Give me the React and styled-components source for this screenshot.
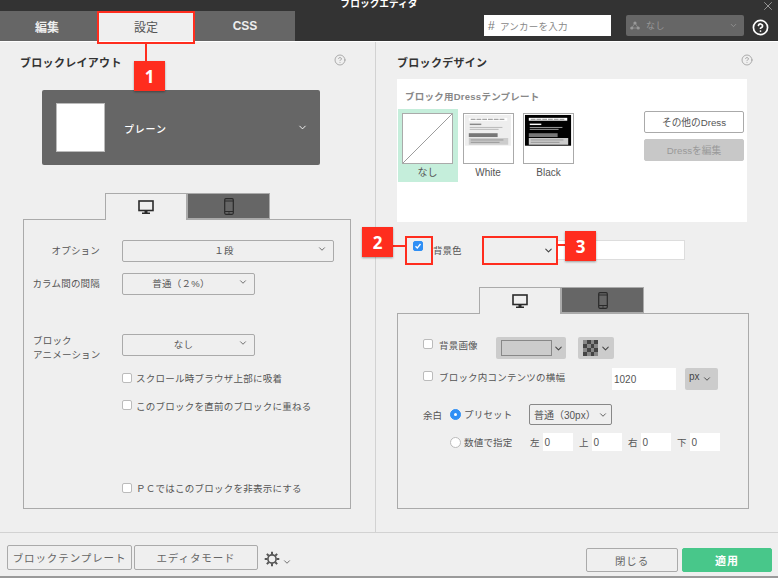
import React from "react";
import styled, { createGlobalStyle } from "styled-components";
import { ChevronDown, CircleHelp, X } from "lucide-react";

const Global = createGlobalStyle`
  html, body { margin: 0; padding: 0; background: #efefef; }
  * { box-sizing: border-box; }
  body { font-family: "Liberation Sans", "Noto Sans CJK JP", sans-serif; color: #555; }
`;

const Page = styled.div`
  position: relative; width: 778px; height: 578px; overflow: hidden; background: #efefef;
  border-bottom: 2px solid #9a9a9a;
`;
const Header = styled.header`
  position: relative; height: 41px; background: #333; display: flex; flex-direction: column;
`;
const TitleBar = styled.div`
  height: 11px; overflow: hidden; text-align: center; padding-right: 20px;
  color: #fff; font-size: 9.7px; font-weight: 700; line-height: 7px;
`;
const CloseIcon = styled(X)`
  position: absolute; top: -1px; right: 3px; color: #aaa;
`;
const HeaderRow = styled.div`
  height: 30px; display: flex; align-items: flex-start;
`;
const TopTab = styled.div`
  width: ${p => p.$w}px; height: 30px; display: flex; align-items: center; justify-content: center;
  padding-right: ${p => p.$pr || 0}px;
  font-size: 12px; font-weight: ${p => (p.$active ? 400 : 700)};
  background: ${p => (p.$active ? "#efefef" : "#666")};
  color: ${p => (p.$active ? "#555" : "#eee")};
`;
const AnchorInput = styled.div`
  margin: 4px 0 0 189px; width: 127px; height: 21px; background: #fff; display: flex; align-items: center;
  padding-left: 4px; gap: 5px; font-size: 9.5px; color: #888; letter-spacing: .25px;
`;
const HashMark = styled.span`
  font-size: 12px; color: #777;
`;
const AnchorSelect = styled.div`
  margin: 4px 0 0 15px; width: 118px; height: 21px; background: #666; border-radius: 2px; display: flex; align-items: center;
  padding: 0 6px 0 4px; gap: 6px; font-size: 9px; color: #999; letter-spacing: .6px;
`;
const Grow = styled.span`
  flex: 1;
`;
const HeadHelp = styled(CircleHelp)`
  margin: 8px 0 0 8px; color: #fff;
`;

const Main = styled.main`
  height: 491px; border-top: 1px solid #fff; display: flex;
`;
const LeftCol = styled.section`
  width: 376px; border-right: 1px solid #d2d2d2; display: flex; flex-direction: column;
`;
const RightCol = styled.section`
  flex: 1; display: flex; flex-direction: column; padding-left: 21px;
`;
const SectionHead = styled.div`
  margin-top: 11px; height: 18px; display: flex; align-items: center; justify-content: space-between;
  padding-left: ${p => p.$pl}px; width: ${p => p.$w}px;
  font-size: 11px; font-weight: 700; color: #333; letter-spacing: .3px;
`;
const SmallHelp = styled(CircleHelp)`
  color: #999; margin-top: -5px;
`;
const BlockSelect = styled.div`
  margin: 19px 0 0 42px; width: 278px; height: 75px; background: #666; border-radius: 2px;
  display: flex; align-items: center; padding: 0 12px 0 14px; color: #fff; font-size: 10px; letter-spacing: .8px; font-weight: 500;
`;
const BlockThumb = styled.div`
  width: 49px; height: 49px; background: #fff; border: 1px solid #bbb; margin-right: 19px;
`;
const BlockName = styled.span`
  flex: 1; padding-top: 2px;
`;

const DeviceTabs = styled.div`
  display: flex; margin: ${p => p.$mt}px 0 -1px ${p => p.$ml}px; position: relative; z-index: 1;
`;
const DeviceTab = styled.div`
  width: ${p => p.$w}px; height: ${p => (p.$active ? 27 : 26)}px; display: flex; align-items: center; justify-content: center;
  background: ${p => (p.$active ? "#efefef" : "#666")};
  border: 1px solid #aaa; ${p => (p.$active ? "border-bottom: 0;" : "")}
  color: #2a2a2a;
`;
const Panel = styled.div`
  width: ${p => p.$w}px; height: ${p => p.$h}px; margin-left: ${p => p.$ml}px; border: 1px solid #aaa;
  padding: ${p => p.$pt}px 0 0 ${p => p.$pl}px; display: flex; flex-direction: column;
`;
const FormRow = styled.div`
  display: flex; align-items: ${p => p.$align || "center"}; margin-top: ${p => p.$mt || 0}px; margin-left: ${p => p.$ml || 0}px;
`;
const FieldLabel = styled.div`
  width: 76px; margin-right: 22px; font-size: 9.5px; letter-spacing: .2px; line-height: 14px; color: #555; white-space: nowrap;
  text-align: ${p => (p.$left ? "left" : "right")};
  padding-left: ${p => (p.$left ? 9 : 0)}px;
`;
const Select = styled.div`
  position: relative; width: ${p => p.$w}px; height: 22px; border: 1px solid #aaa; border-radius: 2px;
  display: flex; align-items: center; justify-content: center; padding: 0 ${p => p.$pr || 0}px 3px 0;
  font-size: 9.5px; letter-spacing: .3px; color: #555;
`;
const SelectChevron = styled(ChevronDown)`
  position: absolute; right: 6px; top: 3px; color: #555;
`;
const CheckLine = styled.label`
  display: flex; align-items: center; gap: 4px; height: 14px; margin-left: 98px; margin-top: ${p => p.$mt}px;
  font-size: 9.5px; letter-spacing: .25px; color: #555; white-space: nowrap;
`;
const Box = styled.span`
  display: flex; align-items: center; justify-content: center; flex: none;
  width: 10px; height: 10px; border-radius: 2px; border: 1px solid #bbb; background: ${p => (p.$on ? "#2f8ff5" : "#fff")};
  border-color: ${p => (p.$on ? "#2f8ff5" : "#bbb")};
  margin-bottom: ${p => p.$up || 0}px;
`;

const Card = styled.div`
  margin-top: 8px; width: 350px; height: 143px; background: #fff; display: flex; flex-direction: column; padding-top: 11px;
`;
const CardTitle = styled.div`
  height: 14px; line-height: 14px; margin-left: 8px; font-size: 9.5px; font-weight: 700; color: #888; letter-spacing: .25px;
`;
const CardBody = styled.div`
  margin-top: 5px; display: flex; justify-content: space-between; padding: 0 3px 0 1px;
`;
const Tiles = styled.div`
  display: flex; gap: 1px;
`;
const Tile = styled.div`
  width: 59.5px; height: 73px; padding: 4px 0 0 4px; background: ${p => (p.$on ? "#c5eedb" : "transparent")};
`;
const Thumb = styled.svg`
  display: block; width: 51px; height: 51px; border: 1px solid #aaa; background: #fff;
`;
const TileName = styled.div`
  width: 51px; text-align: center; margin-top: 2px; font-size: 10px; line-height: 14px; color: #555;
`;
const DressButtons = styled.div`
  margin-top: 2px; display: flex; flex-direction: column; gap: 6px;
`;
const DressButton = styled.div`
  width: 100px; height: 22px; border-radius: 2px; display: flex; align-items: center; justify-content: center;
  font-size: 9.7px;
  border: 1px solid ${p => (p.$off ? "#c8c8c8" : "#aaa")};
  background: ${p => (p.$off ? "#c8c8c8" : "#fff")};
  color: ${p => (p.$off ? "#999" : "#555")};
`;
const ColorRow = styled.div`
  margin-top: 18px; height: 20px; padding-left: 16px; display: flex; align-items: center; font-size: 9.5px;
`;
const ColorLabel = styled.span`
  margin-left: 10px; width: 51px;
`;
const ColorSelect = styled.div`
  width: 73px; height: 20px; display: flex; align-items: center; justify-content: flex-end; padding-right: 3px; color: #444;
`;
const ColorValue = styled.div`
  width: 128px; height: 20px; background: #fff; border: 1px solid #ddd;
`;
const RowText = styled.span`
  width: ${p => p.$w}px; margin-left: ${p => p.$ml || 0}px; margin-bottom: ${p => p.$up || 0}px;
  font-size: 9.5px; letter-spacing: ${p => p.$ls || ".2px"}; color: #555; white-space: nowrap;
`;
const GraySelect = styled.div`
  width: ${p => p.$w}px; height: 22px; margin-left: ${p => p.$ml || 0}px; background: #ccc; border-radius: 2px;
  display: flex; align-items: center; padding-left: ${p => p.$pl}px; color: #444; font-size: 10px;
`;
const ColorSwatch = styled.div`
  width: 51px; height: 16px; background: #ccc; border: 1px solid #888; margin-right: 1px;
`;
const UnitText = styled.span`
  margin: 0 2px 5px 0;
`;
const NumberInput = styled.div`
  width: ${p => p.$w}px; height: ${p => p.$h}px; background: #fff; display: flex; align-items: center; padding-left: 2px;
  font-size: 10px; color: #555;
`;
const Gap = styled.span`
  width: ${p => p.$w}px; flex: none;
`;
const Radio = styled.span`
  width: 11px; height: 11px; border-radius: 50%; flex: none; display: flex; align-items: center; justify-content: center;
  background: ${p => (p.$on ? "#2f8ff5" : "#fff")}; border: 1px solid ${p => (p.$on ? "#2f8ff5" : "#bbb")};
`;
const RadioDot = styled.span`
  width: 3px; height: 3px; border-radius: 50%; background: #fff;
`;
const PaddingSelect = styled.div`
  width: 83px; height: 21px; border: 1px solid #888; border-radius: 2px; display: flex; align-items: center; justify-content: space-between;
  padding: 0 3px 0 4px; font-size: 10px; color: #555;
`;
const Side = styled.div`
  display: flex; align-items: center; gap: 3px; font-size: 9.5px; color: #555; margin-right: 6.5px;
`;

const Footer = styled.footer`
  height: 44px; border-top: 1px solid #d2d2d2; display: flex; padding: 12px 6px 0 7px; justify-content: space-between;
`;
const FooterGroup = styled.div`
  display: flex; gap: ${p => p.$gap}px; align-items: flex-start; margin-top: ${p => p.$mt || 0}px;
`;
const FootButton = styled.div`
  width: ${p => p.$w}px; height: ${p => p.$h}px; border: 1px solid ${p => (p.$primary ? "#48c78a" : "#aaa")}; border-radius: 2px;
  display: flex; align-items: center; justify-content: center;
  font-size: ${p => p.$fs || 10.5}px; letter-spacing: ${p => p.$ls || ".9px"}; font-weight: ${p => (p.$primary ? 700 : 400)};
  background: ${p => (p.$primary ? "#48c78a" : "transparent")}; color: ${p => (p.$primary ? "#fff" : "#666")};
`;
const GearWrap = styled.div`
  margin: 6px 0 0 4px; display: flex; align-items: flex-end; gap: 2px; color: #555;
`;

const RedOutline = styled.div`
  position: absolute; left: ${p => p.$x}px; top: ${p => p.$y}px; width: ${p => p.$w}px; height: ${p => p.$h}px;
  border: 2px solid #ff2d1e; z-index: 5;
`;
const RedLine = styled.div`
  position: absolute; left: ${p => p.$x}px; top: ${p => p.$y}px; width: ${p => p.$w}px; height: ${p => p.$h}px;
  background: #ff2d1e; z-index: 5;
`;
const Badge = styled.div`
  position: absolute; left: ${p => p.$x}px; top: ${p => p.$y}px; width: 31px; height: 30px; background: #ff2d1e; z-index: 6;
  display: flex; align-items: center; justify-content: center; color: #fff; font-size: 17px; font-weight: 700;
  font-family: "Noto Sans", sans-serif; box-shadow: 0 1px 2px rgba(0,0,0,.35);
`;

const Monitor = () => (
  <svg width="16" height="15" viewBox="0 0 16 15">
    <rect x="1" y="1" width="14" height="9.5" fill="none" stroke="currentColor" strokeWidth="1.6" />
    <path d="M6.5 11h3v1.6h2.5V14H4v-1.4h2.5z" fill="currentColor" />
  </svg>
);
const Phone = () => (
  <svg width="10" height="17" viewBox="0 0 10 17">
    <rect x=".7" y=".7" width="8.6" height="15.6" rx="1.2" fill="none" stroke="currentColor" strokeWidth="1.2" />
    <path d="M1 3h8M1 13.5h8" stroke="currentColor" />
    <circle cx="5" cy="15" r=".7" fill="currentColor" />
  </svg>
);
const Check = () => (
  <svg width="8" height="8" viewBox="0 0 8 8">
    <path d="M1.5 4.2l1.8 1.8 3.2-4" fill="none" stroke="#fff" strokeWidth="1.3" />
  </svg>
);
const Nodes = () => (
  <svg width="10" height="9" viewBox="0 0 10 9" fill="#999">
    <circle cx="5" cy="2" r="1.6" />
    <circle cx="1.8" cy="7" r="1.6" />
    <circle cx="8.2" cy="7" r="1.6" />
    <path d="M5 2L1.8 7h6.4z" fill="none" stroke="#999" strokeWidth=".7" />
  </svg>
);
const Gear = () => (
  <svg width="16" height="16" viewBox="0 0 18 18" fill="none" stroke="currentColor">
    <circle cx="9" cy="9" r="4.6" strokeWidth="1.8" />
    <path strokeWidth="2.2" d="M9 .8v3M9 14.2v3M.8 9h3M14.2 9h3M3.2 3.2l2.1 2.1M12.7 12.7l2.1 2.1M3.2 14.8l2.1-2.1M12.7 5.3l2.1-2.1" />
  </svg>
);
const Checker = () => (
  <svg width="15" height="16" viewBox="0 0 4 4" preserveAspectRatio="none" shapeRendering="crispEdges">
    <rect width="4" height="4" fill="#444" />
    {[[0, 0], [2, 0], [1, 1], [3, 1], [0, 2], [2, 2], [1, 3], [3, 3]].map(([x, y]) => (
      <rect key={`${x}-${y}`} x={x} y={y} width="1" height="1" fill="#888" />
    ))}
  </svg>
);
const DressPreview = ({ dark }) => (
  <Thumb viewBox="0 0 51 51">
    <rect x="1" y="1" width="48" height="32" fill={dark ? "#000" : "#eee"} />
    <rect x="5" y="4" width="40" height="3" fill="#fff" />
    <path d="M7 5.5h36" stroke="#888" strokeDasharray="5 1" />
    <rect x="6" y="10" width="12" height="1.5" fill={dark ? "#fff" : "#888"} />
    <path d="M6 14h34M6 16h30" stroke={dark ? "#ccc" : "#aaa"} strokeWidth=".8" />
    <rect x="5" y="20" width="30" height="4" fill="#777" />
    <rect x="5" y="25" width="41" height="7" fill="#ccc" />
    <path d="M7 27h34M7 29.5h30" stroke="#888" strokeWidth=".8" />
  </Thumb>
);

export default function App() {
  return (
    <Page>
      <Global />
      <Header>
        <TitleBar>ブロックエディタ</TitleBar>
        <CloseIcon size={14} strokeWidth={1.4} />
        <HeaderRow>
          <TopTab $w={97} $pr={3}>編集</TopTab>
          <TopTab $w={98} $active>設定</TopTab>
          <TopTab $w={100}>CSS</TopTab>
          <AnchorInput><HashMark>#</HashMark>アンカーを入力</AnchorInput>
          <AnchorSelect>
            <Nodes />
            <Grow>なし</Grow>
            <ChevronDown size={9} color="#999" />
          </AnchorSelect>
          <HeadHelp size={17} strokeWidth={2.4} />
        </HeaderRow>
      </Header>

      <Main>
        <LeftCol>
          <SectionHead $pl={20} $w={346}>
            ブロックレイアウト
            <SmallHelp size={12} strokeWidth={1.6} />
          </SectionHead>
          <BlockSelect>
            <BlockThumb />
            <BlockName>プレーン</BlockName>
            <ChevronDown size={11} />
          </BlockSelect>
          <DeviceTabs $mt={28} $ml={105}>
            <DeviceTab $w={82} $active><Monitor /></DeviceTab>
            <DeviceTab $w={83}><Phone /></DeviceTab>
          </DeviceTabs>
          <Panel $w={328} $h={290} $ml={23} $pt={20} $pl={0}>
            <FormRow>
              <FieldLabel>オプション</FieldLabel>
              <Select $w={212} $pr={8}>１段<SelectChevron size={10} /></Select>
            </FormRow>
            <FormRow $mt={11}>
              <FieldLabel>カラム間の間隔</FieldLabel>
              <Select $w={133} $pr={15}>普通（２%）<SelectChevron size={10} /></Select>
            </FormRow>
            <FormRow $mt={39} $align="flex-start">
              <FieldLabel $left>ブロック<br />アニメーション</FieldLabel>
              <Select $w={133} $pr={10}>なし<SelectChevron size={10} /></Select>
            </FormRow>
            <CheckLine $mt={9}><Box />スクロール時ブラウザ上部に吸着</CheckLine>
            <CheckLine $mt={14}><Box $up={3} />このブロックを直前のブロックに重ねる</CheckLine>
            <CheckLine $mt={68}><Box />ＰＣではこのブロックを非表示にする</CheckLine>
          </Panel>
        </LeftCol>

        <RightCol>
          <SectionHead $pl={0} $w={356}>
            ブロックデザイン
            <SmallHelp size={12} strokeWidth={1.6} />
          </SectionHead>
          <Card>
            <CardTitle>ブロック用Dressテンプレート</CardTitle>
            <CardBody>
              <Tiles>
                <Tile $on>
                  <Thumb viewBox="0 0 51 51">
                    <path d="M0 51L51 0" stroke="#999" strokeWidth="1" />
                  </Thumb>
                  <TileName>なし</TileName>
                </Tile>
                <Tile>
                  <DressPreview />
                  <TileName>White</TileName>
                </Tile>
                <Tile>
                  <DressPreview dark />
                  <TileName>Black</TileName>
                </Tile>
              </Tiles>
              <DressButtons>
                <DressButton>その他のDress</DressButton>
                <DressButton $off>Dressを編集</DressButton>
              </DressButtons>
            </CardBody>
          </Card>
          <ColorRow>
            <Box $on $up={8}><Check /></Box>
            <ColorLabel>背景色</ColorLabel>
            <ColorSelect><ChevronDown size={11} strokeWidth={2.4} /></ColorSelect>
            <ColorValue />
          </ColorRow>
          <DeviceTabs $mt={27} $ml={82}>
            <DeviceTab $w={82} $active><Monitor /></DeviceTab>
            <DeviceTab $w={83}><Phone /></DeviceTab>
          </DeviceTabs>
          <Panel $w={352} $h={196} $ml={0} $pt={23} $pl={25}>
            <FormRow>
              <Box $up={9} />
              <RowText $w={57} $ml={6} $up={6}>背景画像</RowText>
              <GraySelect $w={70} $pl={5}><ColorSwatch /><ChevronDown size={11} strokeWidth={2.2} /></GraySelect>
              <GraySelect $w={36} $ml={12} $pl={0}><Gap $w={5} /><Checker /><Gap $w={2} /><ChevronDown size={11} strokeWidth={2.2} /></GraySelect>
            </FormRow>
            <FormRow $mt={9}>
              <Box $up={7} />
              <RowText $w={173} $ml={6} $up={4}>ブロック内コンテンツの横幅</RowText>
              <NumberInput $w={64} $h={22}>1020</NumberInput>
              <GraySelect $w={33} $ml={9} $pl={4}><UnitText>px</UnitText><ChevronDown size={10} strokeWidth={2.2} /></GraySelect>
            </FormRow>
            <FormRow $mt={14}>
              <RowText $w={18} $ls="0">余白</RowText>
              <Gap $w={9} />
              <Radio $on><RadioDot /></Radio>
              <RowText $w={65} $ml={3} $up={2}>プリセット</RowText>
              <PaddingSelect>普通（30px）<ChevronDown size={10} strokeWidth={2.2} /></PaddingSelect>
            </FormRow>
            <FormRow $mt={8} $ml={27}>
              <Radio />
              <RowText $w={66} $ml={3}>数値で指定</RowText>
              <Side>左<NumberInput $w={30} $h={18}>0</NumberInput></Side>
              <Side>上<NumberInput $w={30} $h={18}>0</NumberInput></Side>
              <Side>右<NumberInput $w={30} $h={18}>0</NumberInput></Side>
              <Side>下<NumberInput $w={30} $h={18}>0</NumberInput></Side>
            </FormRow>
          </Panel>
        </RightCol>
      </Main>

      <Footer>
        <FooterGroup $gap={2}>
          <FootButton $w={125} $h={25}>ブロックテンプレート</FootButton>
          <FootButton $w={124} $h={25}>エディタモード</FootButton>
          <GearWrap><Gear /><ChevronDown size={10} strokeWidth={2} /></GearWrap>
        </FooterGroup>
        <FooterGroup $gap={4} $mt={3}>
          <FootButton $w={92} $h={24}>閉じる</FootButton>
          <FootButton $w={90} $h={24} $primary $fs={11}>適用</FootButton>
        </FooterGroup>
      </Footer>

      <RedOutline $x={97} $y={11} $w={98} $h={33} />
      <RedLine $x={145} $y={44} $w={2} $h={18} />
      <Badge $x={134} $y={61}>1</Badge>

      <Badge $x={362} $y={227}>2</Badge>
      <RedLine $x={393} $y={245} $w={12} $h={2} />
      <RedOutline $x={405} $y={236} $w={28} $h={29} />

      <RedOutline $x={482} $y={236} $w={76} $h={29} />
      <RedLine $x={558} $y={244} $w={7} $h={2} />
      <Badge $x={565} $y={231}>3</Badge>
    </Page>
  );
}
